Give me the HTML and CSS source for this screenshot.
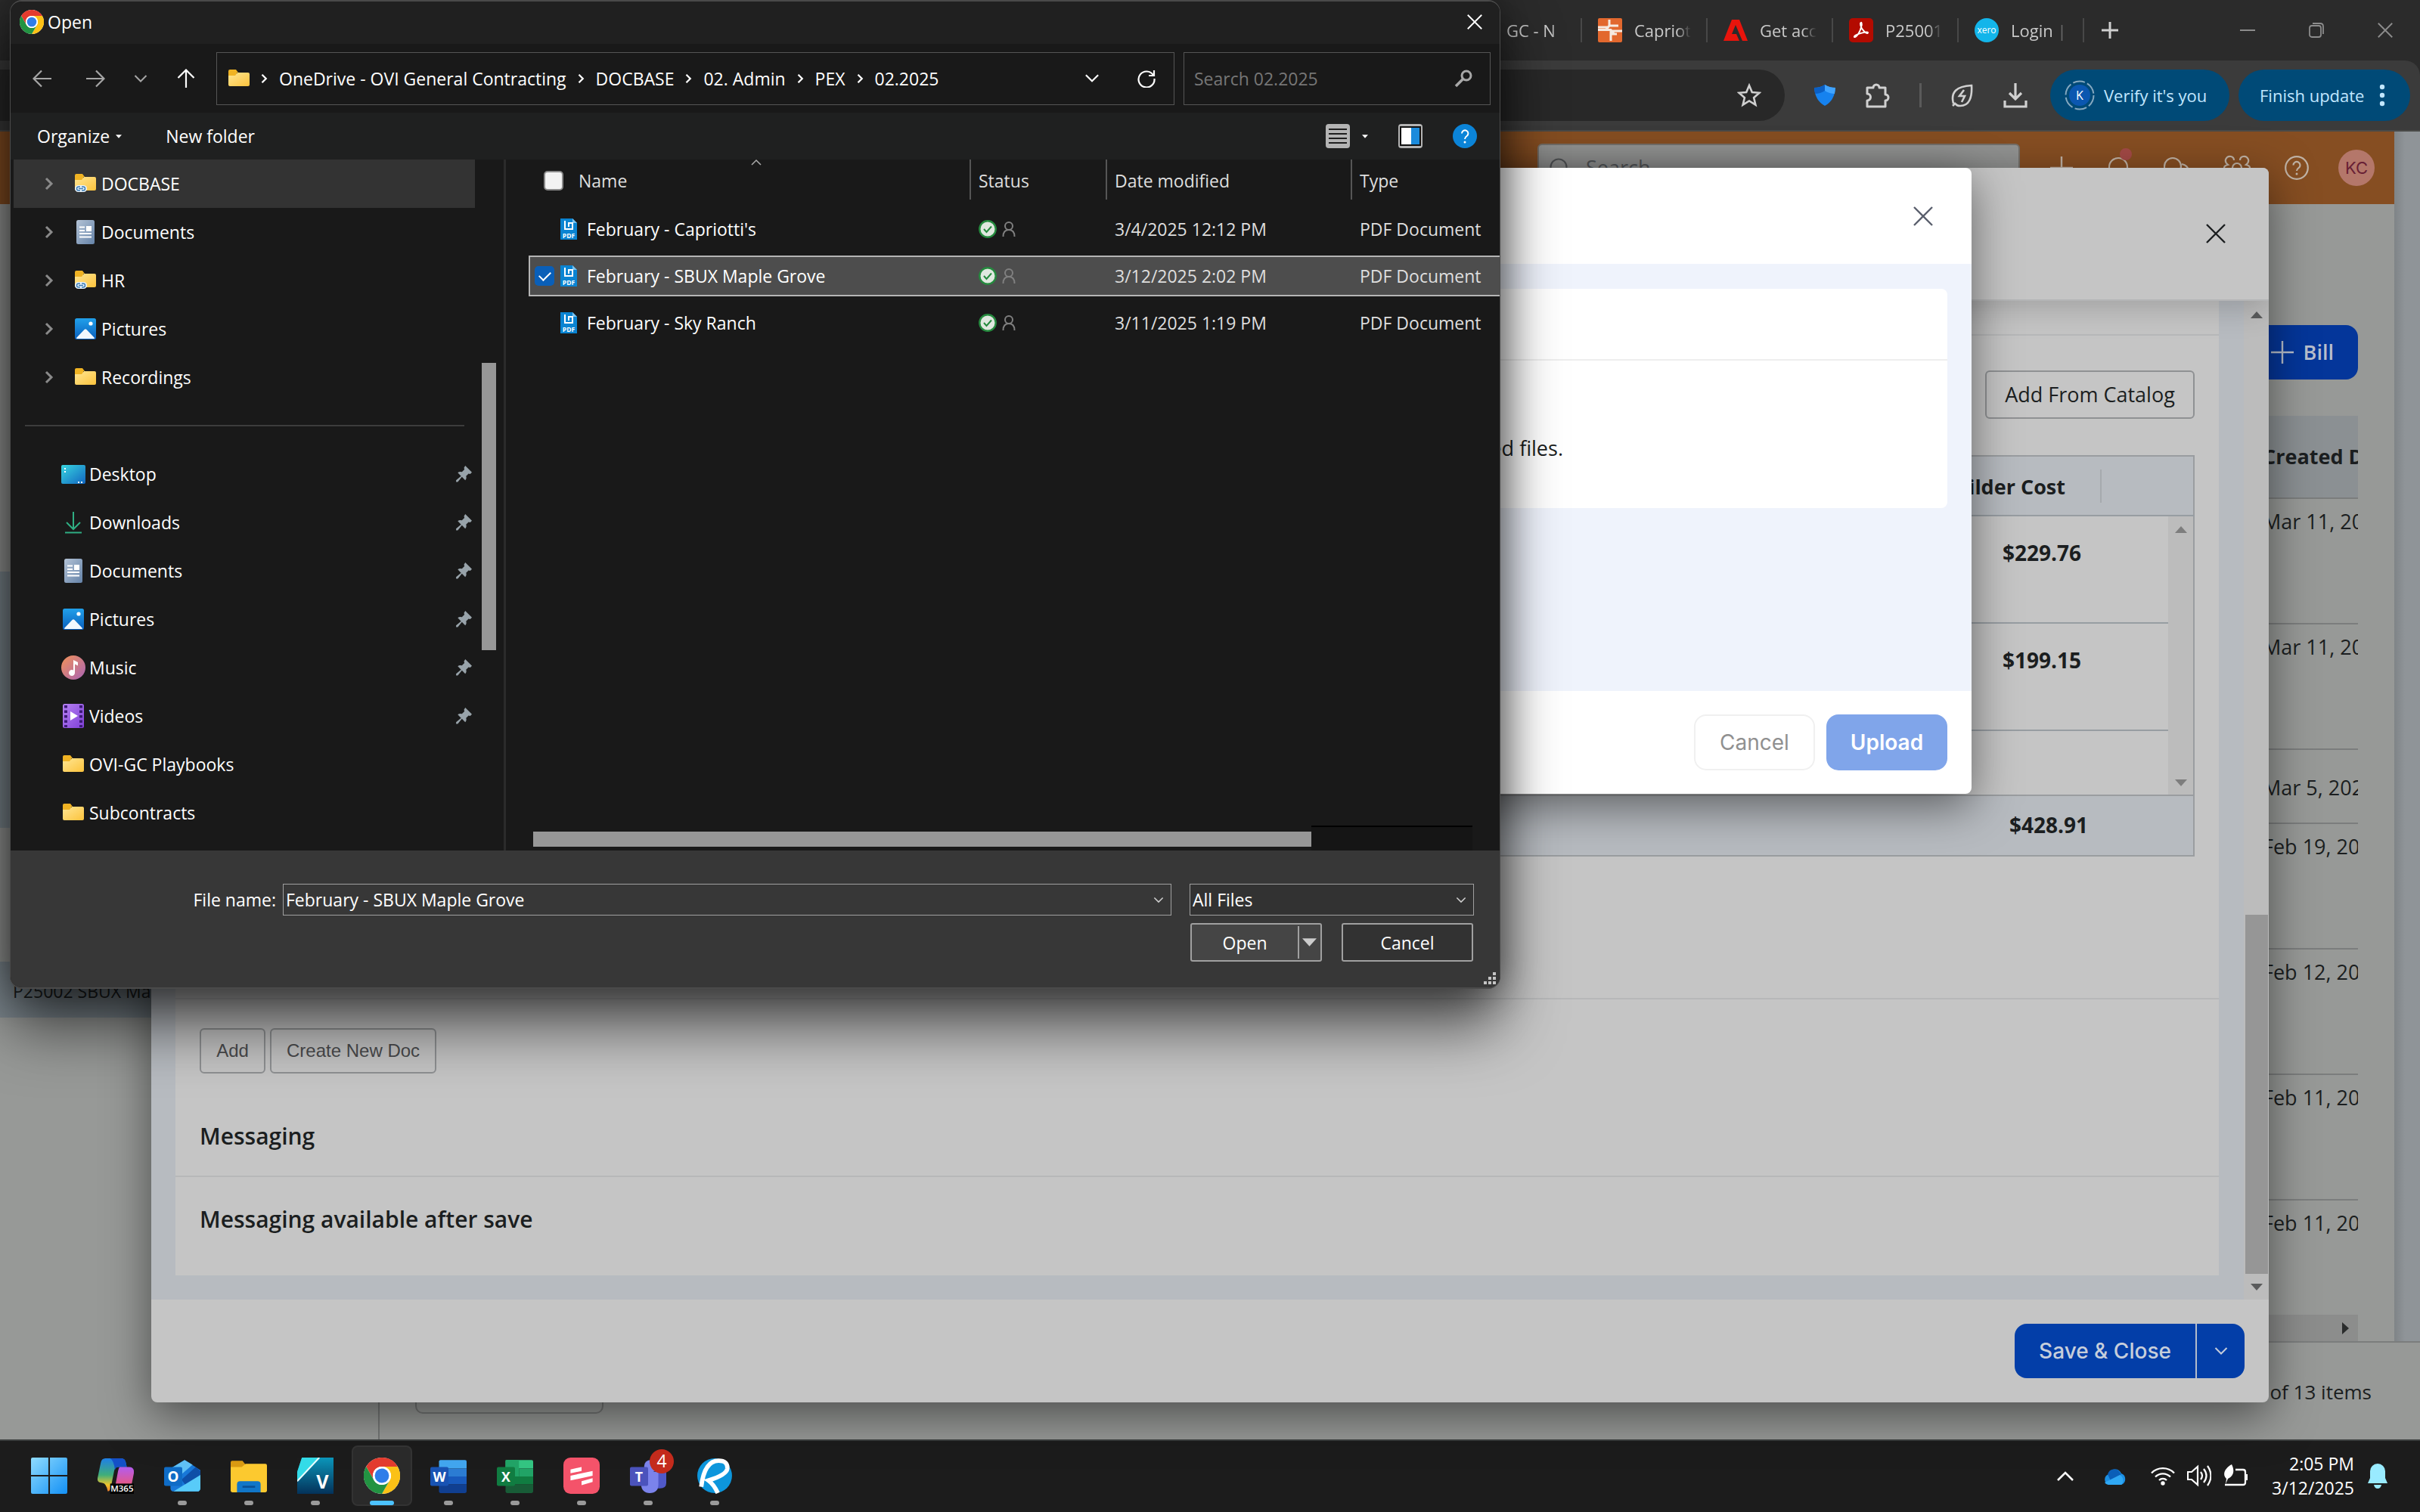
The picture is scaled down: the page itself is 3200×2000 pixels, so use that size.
FILE: index.html
```html
<!DOCTYPE html>
<html lang="en">

<head>
    <meta charset="utf-8">
    <title>Open</title>
    <link rel="stylesheet" href="styles.css">
</head>

<body>
    <!-- shared icons -->
    <svg class="sprite" aria-hidden="true">
        <defs>
            <linearGradient id="gFolder" x1="0" y1="0" x2="1" y2="1">
                <stop offset="0" stop-color="#ffe694" />
                <stop offset="1" stop-color="#fcc33c" />
            </linearGradient>
            <linearGradient id="gDoc" x1="0" y1="0" x2="1" y2="1">
                <stop offset="0" stop-color="#b4c3d6" />
                <stop offset="1" stop-color="#6583a8" />
            </linearGradient>
            <linearGradient id="gDesk" x1="0" y1="0" x2="1" y2="1">
                <stop offset="0" stop-color="#38d6e0" />
                <stop offset="1" stop-color="#1266c0" />
            </linearGradient>
            <linearGradient id="gMusic" x1="0" y1="0" x2="1" y2="1">
                <stop offset="0" stop-color="#f29257" />
                <stop offset="1" stop-color="#a963b5" />
            </linearGradient>
            <linearGradient id="gPurple" x1="0" y1="0" x2="1" y2="1">
                <stop offset="0" stop-color="#b681f2" />
                <stop offset="1" stop-color="#7f3fd8" />
            </linearGradient>
            <linearGradient id="gBlue" x1="0" y1="0" x2="0" y2="1">
                <stop offset="0" stop-color="#21a0ea" />
                <stop offset="1" stop-color="#0a5fbd" />
            </linearGradient>
            <linearGradient id="gWin" x1="0" y1="0" x2="1" y2="1">
                <stop offset="0" stop-color="#8fdcff" />
                <stop offset="1" stop-color="#1390f5" />
            </linearGradient>
            <linearGradient id="gCopA" x1="0" y1="0" x2="0" y2="1">
                <stop offset="0" stop-color="#1f7fe8" />
                <stop offset=".5" stop-color="#3fae7a" />
                <stop offset=".8" stop-color="#f0c52c" />
                <stop offset="1" stop-color="#f07a2c" />
            </linearGradient>
            <linearGradient id="gCopB" x1="0" y1="0" x2="0" y2="1">
                <stop offset="0" stop-color="#b35cf0" />
                <stop offset="1" stop-color="#f2566a" />
            </linearGradient>
            <linearGradient id="gV" x1="0" y1="0" x2="0" y2="1">
                <stop offset="0" stop-color="#0b96ba" />
                <stop offset="1" stop-color="#04325a" />
            </linearGradient>
        </defs>
        <symbol id="chrome" viewBox="0 0 48 48">
            <circle cx="24" cy="24" r="24" fill="#fff" />
            <path d="M3.2 12A24 24 0 0 1 44.8 12H24a12 12 0 0 0-10.4 18z" fill="#e33b2e" />
            <path d="M44.8 12A24 24 0 0 1 24 48l10.4-18A12 12 0 0 0 24 12z" fill="#fbc116" />
            <path d="M24 48A24 24 0 0 1 3.2 12l10.4 18a12 12 0 0 0 20.8 0z" fill="#229342" />
            <circle cx="24" cy="24" r="12" fill="#fff" />
            <circle cx="24" cy="24" r="9.4" fill="#2f7de9" />
        </symbol>
        <symbol id="folder" viewBox="0 0 28 24">
            <path d="M0 2a2 2 0 0 1 2-2h8l3 4h-2v6H0z" fill="#f0b323" />
            <path d="M0 8h9l3-4h14a2 2 0 0 1 2 2v14a2 2 0 0 1-2 2H2a2 2 0 0 1-2-2z" fill="url(#gFolder)" />
        </symbol>
        <symbol id="folderlink" viewBox="0 0 28 26">
            <path d="M0 2a2 2 0 0 1 2-2h8l3 4h-2v6H0z" fill="#f0b323" />
            <path d="M0 8h9l3-4h14a2 2 0 0 1 2 2v14a2 2 0 0 1-2 2H2a2 2 0 0 1-2-2z" fill="url(#gFolder)" />
            <rect x="0" y="15" width="16" height="9" rx="4.5" fill="#e8f2fa" />
            <path d="M7 17H5a2.500 2.500 0 0 0 0 5h2M9 17h2a2.500 2.500 0 0 1 0 5H9M5 19.500h6" fill="none" stroke="#3d7db5" stroke-width="1.500" />
        </symbol>
        <symbol id="doc" viewBox="0 0 28 32">
            <rect x="2" width="24" height="32" rx="2.500" fill="url(#gDoc)" />
            <path d="M6 9.500h7M6 14h7M6 18h16M6 22.500h16" stroke="#fff" stroke-width="2" />
            <rect x="15" y="8" width="7" height="7" fill="#fff" />
        </symbol>
        <symbol id="pictures" viewBox="0 0 28 28">
            <rect width="28" height="28" rx="2.500" fill="url(#gBlue)" />
            <path d="M2 26l10.500-11a2 2 0 0 1 3 0L26 26q0 1-1 1H3q-1 0-1-1z" fill="#f2f8fd" />
            <circle cx="21" cy="7" r="2.600" fill="#fff" />
        </symbol>
        <symbol id="desktop" viewBox="0 0 32 25">
            <rect width="32" height="25" rx="2" fill="url(#gDesk)" />
            <path d="M4 5h2M4 9h2M22 23h2M26 23h2" stroke="#fff" stroke-width="2" />
        </symbol>
        <symbol id="downloads" viewBox="0 0 28 30">
            <path d="M14 1v23M5 15l9 9 9-9M3 28.500h22" fill="none" stroke="#2fae83" stroke-width="2" />
        </symbol>
        <symbol id="music" viewBox="0 0 32 32">
            <circle cx="16" cy="16" r="16" fill="url(#gMusic)" />
            <path d="M16 6v13.500a4 4 0 1 0 2 3V11.500l4 2V9z" fill="#fff" />
        </symbol>
        <symbol id="videos" viewBox="0 0 28 32">
            <rect width="28" height="32" rx="2.500" fill="url(#gPurple)" />
            <path d="M4 2v29M24 2v29" stroke="#3d1a78" stroke-width="4" stroke-dasharray="3.500 3" />
            <path d="M10 10l10 6-10 6z" fill="#fff" />
        </symbol>
        <symbol id="pin" viewBox="0 0 20 20">
            <path d="M12 0l8 8-2 2-2-.5-3 3q1 3-1 5l-4-4-5 6H1v-2l6-5-4-4q2-2 5-1l3-3-.5-2z" fill="#98a3aa" />
        </symbol>
        <symbol id="pdffile" viewBox="0 0 22 28">
            <path d="M0 0h16l6 6v22H0z" fill="#0a84d2" />
            <path d="M16 0l6 6h-6z" fill="#7cc4f0" />
            <path d="M6 3v11h10V6h-5v5" fill="none" stroke="#fff" stroke-width="2" />
            <text x="11" y="25.500" font-size="8.500" font-weight="700" text-anchor="middle" fill="#fff" font-family="Open Sans, sans-serif">PDF</text>
        </symbol>
        <symbol id="synced" viewBox="0 0 24 24">
            <circle cx="12" cy="12" r="10.700" fill="#dfe8df" stroke="#258a3e" stroke-width="2.400" />
            <path d="M7 12l3.500 4L17 8.500" fill="none" stroke="#258a3e" stroke-width="2" />
        </symbol>
        <symbol id="person" viewBox="0 0 18 20">
            <circle cx="9" cy="6" r="5" fill="none" stroke="currentColor" stroke-width="2" />
            <path d="M1.500 20c0-6 3-9 7.500-9s7.500 3 7.500 9" fill="none" stroke="currentColor" stroke-width="2" />
        </symbol>
        <symbol id="chev-right" viewBox="0 0 12 18">
            <path d="M2 2l7 7-7 7" fill="none" stroke="currentColor" stroke-width="3" />
        </symbol>
        <symbol id="chev-down" viewBox="0 0 18 12">
            <path d="M1.500 2L9 9.500 16.500 2" fill="none" stroke="currentColor" stroke-width="2" />
        </symbol>
        <symbol id="cross" viewBox="0 0 26 26">
            <path d="M1 1l24 24M25 1L1 25" stroke="currentColor" stroke-width="2.400" />
        </symbol>
        <symbol id="plus" viewBox="0 0 30 30">
            <path d="M15 0v30M0 15h30" stroke="currentColor" stroke-width="2.400" />
        </symbol>
        <symbol id="arrow" viewBox="0 0 26 24">
            <path d="M25 12H2M12 1.500L1.500 12 12 22.500" fill="none" stroke="currentColor" stroke-width="2.200" />
        </symbol>
        <symbol id="help" viewBox="0 0 32 32">
            <circle cx="16" cy="16" r="14.800" fill="none" stroke="currentColor" stroke-width="2.200" />
            <path d="M11.500 12.500a4.500 4.500 0 1 1 7 3.700q-2.500 1.600-2.500 3.800" fill="none" stroke="currentColor" stroke-width="2.200" />
            <circle cx="16" cy="24" r="1.500" fill="currentColor" />
        </symbol>
        <symbol id="tri" viewBox="0 0 16 9">
            <path d="M0 0h16L8 9z" fill="currentColor" />
        </symbol>
    </svg>

    <div class="desktop">

        <!-- browser window -->
        <div class="browser">
            <div class="tabs">
                <div class="tab"><span class="tab-text">GC - N</span></div>
                <div class="tab">
                    <svg class="fav" viewBox="0 0 32 32"><rect width="32" height="32" rx="2" fill="#e2682e" /><path d="M15 2v8H27M15 10l-4 5M0 15.500h17l4 5M0 12h14M32 17H17v13M17 21h8" stroke="#f5e9e0" stroke-width="3" fill="none" /></svg>
                    <span class="tab-text">Capriot</span>
                </div>
                <div class="tab">
                    <svg class="fav" viewBox="0 0 32 32"><path d="M11 2h10l11 28h-7L16 9 11 21h6l4 9H0z" fill="#e8140c" /></svg>
                    <span class="tab-text">Get acc</span>
                </div>
                <div class="tab">
                    <svg class="fav" viewBox="0 0 32 32"><rect width="32" height="32" rx="5" fill="#b30b00" /><path d="M7 25c-2-3 17-8 18-6 0 4-10-4-10-12 1-3 3 0 1 5-1 5-6 14-9 13z" fill="none" stroke="#fff" stroke-width="1.900" /></svg>
                    <span class="tab-text">P25001</span>
                </div>
                <div class="tab">
                    <svg class="fav" viewBox="0 0 32 32"><circle cx="16" cy="16" r="16" fill="#13b5ea" /><text x="16" y="20" font-size="12" text-anchor="middle" fill="#fff" font-family="Open Sans, sans-serif">xero</text></svg>
                    <span class="tab-text">Login |</span>
                </div>
                <button class="newtab" aria-label="New tab"><svg width="22" height="22" viewBox="0 0 22 22"><path d="M11 0v22M0 11h22" stroke="currentColor" stroke-width="3" /></svg></button>
                <div class="winctl">
                    <button aria-label="Minimize"><svg width="20" height="20" viewBox="0 0 20 20"><path d="M0 10h20" stroke="currentColor" stroke-width="2" /></svg></button>
                    <button aria-label="Restore"><svg width="20" height="20" viewBox="0 0 20 20"><rect x="1" y="4" width="15" height="15" rx="3" fill="none" stroke="currentColor" stroke-width="1.800" /><path d="M5 1h10q4 0 4 4v10" fill="none" stroke="currentColor" stroke-width="1.800" /></svg></button>
                    <button aria-label="Close"><svg width="20" height="20"><use href="#cross" /></svg></button>
                </div>
            </div>

            <div class="toolbar">
                <div class="omnibox">
                    <svg width="32" height="32" viewBox="0 0 32 32"><path d="M16 3l3.800 9 9.700.8-7.400 6.400 2.300 9.500L16 23.500l-8.400 5.200 2.300-9.500-7.400-6.400 9.700-.8z" fill="none" stroke="#d0d0d0" stroke-width="2.600" /></svg>
                </div>
                <svg width="30" height="30" viewBox="0 0 30 30"><path d="M15 1q6 4 14 4-1 17-14 24Q2 22 1 5q8 0 14-4z" fill="#1682ef" /><path d="M1 5q8 0 14-4v8q-6 4-13 4z" fill="#0b5fc4" /><path d="M29 5q-8 0-14-4v8q6 4 13 4z" fill="#41a4ff" /></svg>
                <svg width="34" height="34" viewBox="0 0 34 34"><path d="M3 7h8a4 4 0 0 1 8 0h8v9a4 4 0 0 1 0 8v8H3v-8a4 4 0 0 0 0-9z" fill="none" stroke="#d0d0d0" stroke-width="3" stroke-linejoin="round" /></svg>
                <span class="bar"></span>
                <svg width="32" height="32" viewBox="0 0 32 32"><path d="M4 27C0 12 8 4 28 3c1 16-3 27-15 27q-5 0-6-3M3 30l4-4" fill="none" stroke="#d0d0d0" stroke-width="2.600" /><path d="M18 9l-6 8h7l-4 8" fill="none" stroke="#d0d0d0" stroke-width="2.600" /></svg>
                <svg width="32" height="34" viewBox="0 0 32 34"><path d="M16 1v20M8 14l8 8 8-8M2 24v8h28v-8" fill="none" stroke="#d0d0d0" stroke-width="3.200" /></svg>
                <div class="pills">
                    <button class="pill">
                        <svg width="40" height="40" viewBox="0 0 40 40"><circle cx="20" cy="20" r="18.500" fill="none" stroke="#86a9c0" stroke-width="2" stroke-dasharray="16 3.400" /><circle cx="20" cy="20" r="14" fill="#0b57b0" /><text x="20" y="26" font-size="16" text-anchor="middle" fill="#fff" font-family="Open Sans, sans-serif">K</text></svg>
                        Verify it's you
                    </button>
                    <button class="pill finish">Finish update
                        <svg width="8" height="30" viewBox="0 0 8 30"><circle cx="4" cy="4" r="3.200" fill="#c2e7ff" /><circle cx="4" cy="15" r="3.200" fill="#c2e7ff" /><circle cx="4" cy="26" r="3.200" fill="#c2e7ff" /></svg>
                    </button>
                </div>
            </div>

            <div class="page">
                <div class="app">
                    <div class="app-main">
                        <header class="app-head">
                            <label class="search">
                                <svg width="26" height="26" viewBox="0 0 26 26"><circle cx="12" cy="12" r="10.500" fill="none" stroke="#55585b" stroke-width="2" /></svg>
                                <input type="search" placeholder="Search" aria-label="Search">
                            </label>
                            <div class="head-icons">
                                <svg width="30" height="30"><use href="#plus" /></svg>
                                <span class="bell">
                                    <svg width="30" height="32" viewBox="0 0 30 32"><path d="M3 24V15a12 12 0 0 1 24 0v9l2 3H1z" fill="none" stroke="currentColor" stroke-width="2.200" /></svg>
                                    <i class="dot"></i>
                                </span>
                                <svg width="34" height="30" viewBox="0 0 34 30"><path d="M1 26V13a11 11 0 1 1 11 11zM24 10q9 2 9 10v8h-9" fill="none" stroke="currentColor" stroke-width="2.200" /></svg>
                                <svg width="36" height="34" viewBox="0 0 36 34"><path d="M1 17q0-3 5-4-4-3-3-7 2-5 7-4 4 1 4 5M35 17q0-3-5-4 4-3 3-7-2-5-7-4-4 1-4 5" fill="none" stroke="currentColor" stroke-width="2.200" /><circle cx="18" cy="17" r="6" fill="none" stroke="currentColor" stroke-width="2.200" /></svg>
                                <svg width="32" height="32"><use href="#help" /></svg>
                                <span class="avatar">KC</span>
                            </div>
                        </header>
                        <div class="app-body">
                            <aside class="jobs">
                                <div class="job tall"></div>
                                <div class="job">P25002 SBUX Maple Grove</div>
                            </aside>
                            <main class="list">
                                <button class="btn-bill"><svg width="30" height="30"><use href="#plus" /></svg>Bill</button>
                                <table class="bills">
                                    <thead>
                                        <tr><th></th><th class="date">Created Date</th></tr>
                                    </thead>
                                    <tbody>
                                        <tr><td></td><td class="date">Mar 11, 2025</td></tr>
                                        <tr><td></td><td class="date">Mar 11, 2025</td></tr>
                                        <tr class="short"><td></td><td class="date">Mar 5, 2025</td></tr>
                                        <tr><td></td><td class="date">Feb 19, 2025</td></tr>
                                        <tr><td></td><td class="date">Feb 12, 2025</td></tr>
                                        <tr><td></td><td class="date">Feb 11, 2025</td></tr>
                                        <tr class="end"><td></td><td class="date">Feb 11, 2025</td></tr>
                                    </tbody>
                                </table>
                                <div class="hscroll"><svg width="9" height="16" viewBox="0 0 9 16"><path d="M0 0l9 8-9 8z" fill="#2a2c2c" /></svg></div>
                            </main>
                        </div>
                    </div>
                    <div class="edge"></div>
                </div>
                <div class="pager">
                    <div class="pager-left"></div>
                    <div class="pager-box"></div>
                    <span>of 13 items</span>
                </div>

                <!-- bill form -->
                <section class="modal bill">
                    <header><button class="x" aria-label="Close"><svg width="26" height="26"><use href="#cross" /></svg></button></header>
                    <div class="bill-body">
                        <div class="bill-card">
                            <div class="strip"></div>
                            <div class="items">
                                <button class="btn-line big">Add From Catalog</button>
                                <table class="costs">
                                    <colgroup><col><col class="c-cost"><col class="c-gap"><col class="c-bar"></colgroup>
                                    <thead>
                                        <tr><th></th><th class="num">Builder Cost</th><th class="tick"></th><th></th></tr>
                                    </thead>
                                    <tbody>
                                        <tr>
                                            <td></td><td class="num">$229.76</td><td></td>
                                            <td rowspan="3" class="barcell">
                                                <div class="vbar"><svg class="up" width="16" height="9"><use href="#tri" /></svg><svg width="16" height="9"><use href="#tri" /></svg></div>
                                            </td>
                                        </tr>
                                        <tr><td></td><td class="num">$199.15</td><td></td></tr>
                                        <tr class="last"><td></td><td></td><td></td></tr>
                                    </tbody>
                                    <tfoot>
                                        <tr><td></td><td class="num">$428.91</td><td></td><td></td></tr>
                                    </tfoot>
                                </table>
                            </div>
                            <div class="docs">
                                <button class="btn-line">Add</button>
                                <button class="btn-line">Create New Doc</button>
                            </div>
                            <h3>Messaging</h3>
                            <p>Messaging available after save</p>
                        </div>
                        <div class="scroll">
                            <svg class="up" width="16" height="9"><use href="#tri" /></svg>
                            <div class="thumb"></div>
                            <svg width="16" height="9"><use href="#tri" /></svg>
                        </div>
                    </div>
                    <footer>
                        <div class="split">
                            <button>Save &amp; Close</button>
                            <button class="more" aria-label="More"><svg width="18" height="12"><use href="#chev-down" /></svg></button>
                        </div>
                    </footer>
                </section>

                <!-- upload -->
                <section class="modal upload">
                    <header><button class="x" aria-label="Close"><svg width="26" height="26"><use href="#cross" /></svg></button></header>
                    <div class="upload-body">
                        <div class="upload-card">
                            <div class="upload-top"></div>
                            <p>No selected files.</p>
                        </div>
                    </div>
                    <footer>
                        <button class="cancel">Cancel</button>
                        <button class="go">Upload</button>
                    </footer>
                </section>
            </div>
        </div>

        <!-- file picker -->
        <div class="picker">
            <div class="p-title">
                <svg width="32" height="32"><use href="#chrome" /></svg>
                <span>Open</span>
                <button aria-label="Close"><svg width="20" height="20"><use href="#cross" /></svg></button>
            </div>
            <div class="p-nav">
                <div class="arrows">
                    <svg class="back" width="26" height="24"><use href="#arrow" /></svg>
                    <svg class="fwd" width="26" height="24"><use href="#arrow" /></svg>
                    <svg width="18" height="12"><use href="#chev-down" /></svg>
                    <svg class="to-top" width="26" height="24"><use href="#arrow" /></svg>
                </div>
                <div class="address">
                    <svg width="28" height="24"><use href="#folder" /></svg>
                    <svg width="9" height="14"><use href="#chev-right" /></svg>
                    <span>OneDrive - OVI General Contracting</span>
                    <svg width="9" height="14"><use href="#chev-right" /></svg>
                    <span>DOCBASE</span>
                    <svg width="9" height="14"><use href="#chev-right" /></svg>
                    <span>02. Admin</span>
                    <svg width="9" height="14"><use href="#chev-right" /></svg>
                    <span>PEX</span>
                    <svg width="9" height="14"><use href="#chev-right" /></svg>
                    <span>02.2025</span>
                    <svg class="drop" width="20" height="13"><use href="#chev-down" /></svg>
                    <svg width="24" height="24" viewBox="0 0 24 24"><path d="M21 7.500A10.500 10.500 0 1 0 22.500 12M22 1v7h-7" fill="none" stroke="#fff" stroke-width="2.200" /></svg>
                </div>
                <div class="find">
                    <input type="text" placeholder="Search 02.2025" aria-label="Search 02.2025">
                    <svg width="24" height="24" viewBox="0 0 24 24"><circle cx="16" cy="8" r="6" fill="none" stroke="#a8a8a8" stroke-width="3" /><path d="M12 12L2 22" stroke="#a8a8a8" stroke-width="3.500" /></svg>
                </div>
            </div>
            <div class="p-tools">
                <button>Organize <svg width="8" height="5"><use href="#tri" /></svg></button>
                <button>New folder</button>
                <div class="views">
                    <svg width="32" height="32" viewBox="0 0 32 32"><rect width="32" height="32" rx="4" fill="#b4b4b4" /><path d="M4 7h24M4 13h24M4 19h24M4 25h24" stroke="#1f1f1f" stroke-width="2" /></svg>
                    <svg class="caret" width="8" height="5"><use href="#tri" /></svg>
                    <svg width="32" height="32" viewBox="0 0 32 32"><rect width="32" height="32" rx="4" fill="#b4b4b4" /><rect x="3" y="4" width="26" height="24" fill="#fff" stroke="#111" stroke-width="2" /><rect x="17" y="5" width="11" height="22" fill="#1b8bdc" /></svg>
                    <svg class="q" width="32" height="32" viewBox="0 0 32 32"><circle cx="16" cy="16" r="16" fill="#0b84d8" /><path d="M12 12.500a4.200 4.200 0 1 1 6.500 3.500Q16 17.500 16 20" fill="none" stroke="#fff" stroke-width="2" /><circle cx="16" cy="24" r="1.500" fill="#fff" /></svg>
                </div>
            </div>

            <div class="p-body">
                <nav class="places">
                    <ul class="tree">
                        <li class="on"><svg class="exp" width="12" height="18"><use href="#chev-right" /></svg><svg class="ico" width="28" height="26"><use href="#folderlink" /></svg><a href="#">DOCBASE</a></li>
                        <li><svg class="exp" width="12" height="18"><use href="#chev-right" /></svg><svg class="ico" width="28" height="32"><use href="#doc" /></svg><a href="#">Documents</a></li>
                        <li><svg class="exp" width="12" height="18"><use href="#chev-right" /></svg><svg class="ico" width="28" height="26"><use href="#folderlink" /></svg><a href="#">HR</a></li>
                        <li><svg class="exp" width="12" height="18"><use href="#chev-right" /></svg><svg class="ico" width="28" height="28"><use href="#pictures" /></svg><a href="#">Pictures</a></li>
                        <li><svg class="exp" width="12" height="18"><use href="#chev-right" /></svg><svg class="ico" width="28" height="24"><use href="#folder" /></svg><a href="#">Recordings</a></li>
                    </ul>
                    <div class="rule"></div>
                    <ul class="quick">
                        <li><svg class="ico" width="32" height="25"><use href="#desktop" /></svg><a href="#">Desktop</a><svg class="pin" width="22" height="22"><use href="#pin" /></svg></li>
                        <li><svg class="ico" width="32" height="30"><use href="#downloads" /></svg><a href="#">Downloads</a><svg class="pin" width="22" height="22"><use href="#pin" /></svg></li>
                        <li><svg class="ico" width="32" height="32"><use href="#doc" /></svg><a href="#">Documents</a><svg class="pin" width="22" height="22"><use href="#pin" /></svg></li>
                        <li><svg class="ico" width="32" height="28"><use href="#pictures" /></svg><a href="#">Pictures</a><svg class="pin" width="22" height="22"><use href="#pin" /></svg></li>
                        <li><svg class="ico" width="32" height="32"><use href="#music" /></svg><a href="#">Music</a><svg class="pin" width="22" height="22"><use href="#pin" /></svg></li>
                        <li><svg class="ico" width="32" height="32"><use href="#videos" /></svg><a href="#">Videos</a><svg class="pin" width="22" height="22"><use href="#pin" /></svg></li>
                        <li><svg class="ico" width="32" height="24"><use href="#folder" /></svg><a href="#">OVI-GC Playbooks</a></li>
                        <li><svg class="ico" width="32" height="24"><use href="#folder" /></svg><a href="#">Subcontracts</a></li>
                    </ul>
                </nav>
                <div class="places-bar"><div></div></div>

                <div class="files">
                    <svg class="sort" width="14" height="8" viewBox="0 0 14 8"><path d="M1 7l6-6 6 6" fill="none" stroke="#aaa" stroke-width="1.500" /></svg>
                    <table>
                        <colgroup><col class="f-name"><col class="f-status"><col class="f-date"><col></colgroup>
                        <thead>
                            <tr>
                                <th><div class="cell head"><input type="checkbox" aria-label="Select all">Name</div></th>
                                <th>Status</th>
                                <th>Date modified</th>
                                <th>Type</th>
                            </tr>
                        </thead>
                        <tbody>
                            <tr>
                                <td><div class="cell"><span class="nobox"></span><svg width="22" height="28"><use href="#pdffile" /></svg>February - Capriotti's</div></td>
                                <td><div class="state"><svg width="24" height="24"><use href="#synced" /></svg><svg width="18" height="20"><use href="#person" /></svg></div></td>
                                <td>3/4/2025 12:12 PM</td>
                                <td>PDF Document</td>
                            </tr>
                            <tr class="sel">
                                <td><div class="cell"><input type="checkbox" checked aria-label="February - SBUX Maple Grove"><svg width="22" height="28"><use href="#pdffile" /></svg>February - SBUX Maple Grove</div></td>
                                <td><div class="state"><svg width="24" height="24"><use href="#synced" /></svg><svg width="18" height="20"><use href="#person" /></svg></div></td>
                                <td>3/12/2025 2:02 PM</td>
                                <td>PDF Document</td>
                            </tr>
                            <tr>
                                <td><div class="cell"><span class="nobox"></span><svg width="22" height="28"><use href="#pdffile" /></svg>February - Sky Ranch</div></td>
                                <td><div class="state"><svg width="24" height="24"><use href="#synced" /></svg><svg width="18" height="20"><use href="#person" /></svg></div></td>
                                <td>3/11/2025 1:19 PM</td>
                                <td>PDF Document</td>
                            </tr>
                        </tbody>
                    </table>
                    <div class="files-bar"><div class="on"></div><div class="off"></div></div>
                </div>
            </div>

            <div class="p-foot">
                <label for="fname">File name:</label>
                <div class="combo">
                    <input id="fname" type="text" value="February - SBUX Maple Grove">
                    <svg width="14" height="9"><use href="#chev-down" /></svg>
                </div>
                <div class="choices">
                    <div class="combo type">
                        <select aria-label="File type"><option>All Files</option></select>
                        <svg width="14" height="9"><use href="#chev-down" /></svg>
                    </div>
                    <div class="actions">
                        <div class="open">
                            <button>Open</button>
                            <button class="more" aria-label="Open options"><svg width="19" height="11"><use href="#tri" /></svg></button>
                        </div>
                        <button class="cancel">Cancel</button>
                    </div>
                </div>
                <svg class="grip" width="17" height="17" viewBox="0 0 17 17"><path d="M12 0h4v4h-4zM6 6h4v4H6zM12 6h4v4h-4zM0 12h4v4H0zM6 12h4v4H6zM12 12h4v4h-4z" fill="#c4c4c4" /></svg>
            </div>
        </div>

        <!-- taskbar -->
        <div class="taskbar">
            <div class="apps">
                <button aria-label="Start"><svg viewBox="0 0 46 46"><path d="M0 2a2 2 0 0 1 2-2h20v22H0zM24 0h20a2 2 0 0 1 2 2v20H24zM0 24h22v22H2a2 2 0 0 1-2-2zM24 24h22v20a2 2 0 0 1-2 2H24z" fill="url(#gWin)" /></svg></button>
                <button aria-label="M365 Copilot"><svg viewBox="0 0 46 46"><path d="M10 1h20q5 0 6 6l1 5H26q-4 0-5 5l-4 20q-1 6-4 6-2-11-7-11-7 0-6-6L4 7q1-6 6-6z" fill="url(#gCopA)" /><path d="M16 1h14q5 0 6 6l1 5H26q-3 0-4 4-1-12-6-15z" fill="#1450c8" /><path d="M28 12h12q7 0 6 8l-3 15q-1 5-6 5H18q4-2 5-7l3-16q1-4 2-5z" fill="url(#gCopB)" /><rect x="16" y="33" width="30" height="13" fill="#000" /><text x="31" y="43.500" font-size="11" font-weight="600" text-anchor="middle" fill="#fff" font-family="Open Sans, sans-serif">M365</text></svg></button>
                <button class="run" aria-label="Outlook"><svg viewBox="0 0 46 46"><path d="M8 14L26 3l20 13v23a4 4 0 0 1-4 4H12a4 4 0 0 1-4-4z" fill="#1878d8" /><path d="M8 14L26 3l10 6L12 30z" fill="#5fc0f5" /><path d="M22 28L40 12l6 5v5L28 36z" fill="#0e4fa8" /><path d="M12 43l34-21v17a4 4 0 0 1-4 4z" fill="#58cbf9" /><rect y="12" width="23" height="24" rx="2" fill="#0f6cc6" /><text x="11.500" y="31" font-size="18" font-weight="700" text-anchor="middle" fill="#fff" font-family="Open Sans, sans-serif">O</text></svg></button>
                <button class="run" aria-label="File Explorer"><svg viewBox="0 0 46 46"><path d="M0 6q0-2 2-2h13l4 5v7H0z" fill="#d99a12" /><path d="M0 12h14l5-4h25q2 0 2 2v32q0 2-2 2H2q-2 0-2-2z" fill="#fcc92f" /><path d="M8 44V34q0-4 4-4h22q4 0 4 4v10z" fill="#1176c8" /><path d="M15 37h16" stroke="#0a4f94" stroke-width="2.500" /></svg></button>
                <button class="run" aria-label="Vista"><svg viewBox="0 0 46 46"><rect width="46" height="46" fill="url(#gV)" /><path d="M0 0h6L0 18z" fill="#1c1c1c" /><path d="M6 0h22L0 30V18z" fill="#33dbe8" /><path d="M28 0L0 30" stroke="#eaffff" stroke-width="2" /><text x="32" y="39" font-size="24" font-weight="700" text-anchor="middle" fill="#fff" font-family="Open Sans, sans-serif">V</text></svg></button>
                <button class="run active" aria-label="Chrome"><svg><use href="#chrome" /></svg></button>
                <button class="run" aria-label="Word"><svg viewBox="0 0 46 46"><path d="M11 5q0-2 2-2h31q2 0 2 2v9H11z" fill="#41a5ee" /><path d="M11 14h35v10H11z" fill="#2b7cd3" /><path d="M11 24h35v10H11z" fill="#185abd" /><path d="M11 34h35v9q0 2-2 2H13q-2 0-2-2z" fill="#103f91" /><rect y="12" width="23" height="24" rx="2" fill="#1853b3" /><text x="11.500" y="30.500" font-size="17" font-weight="700" text-anchor="middle" fill="#fff" font-family="Open Sans, sans-serif">W</text></svg></button>
                <button class="run" aria-label="Excel"><svg viewBox="0 0 46 46"><path d="M11 5q0-2 2-2h31q2 0 2 2v9H11z" fill="#33c481" /><path d="M11 3h17v21H11z" fill="#21a366" /><path d="M28 14h18v10H28z" fill="#21a366" /><path d="M11 24h35v10H11z" fill="#107c41" /><path d="M11 34h35v9q0 2-2 2H13q-2 0-2-2z" fill="#185c37" /><rect y="12" width="23" height="24" rx="2" fill="#107c41" /><text x="11.500" y="30.500" font-size="17" font-weight="700" text-anchor="middle" fill="#fff" font-family="Open Sans, sans-serif">X</text></svg></button>
                <button class="run" aria-label="Buildertrend"><svg viewBox="0 0 46 46"><rect width="46" height="46" rx="9" fill="#f4536a" /><path d="M9 15l14-3v5L9 20zM9 23l28-6v6L9 29zM23 30l14-4v5l-14 4z" fill="#fff" /></svg></button>
                <button class="run" aria-label="Teams"><svg viewBox="0 0 46 46"><circle cx="26" cy="11" r="8" fill="#7b83eb" /><circle cx="39" cy="12" r="5" fill="#5059c9" /><path d="M30 18h16v14q0 7-8 7h-8z" fill="#5059c9" /><path d="M14 18h22v16q0 11-11 11-10 0-11-11z" fill="#7b83eb" /><rect y="12" width="23" height="24" rx="2" fill="#4b53bc" /><text x="11.500" y="30.500" font-size="17" font-weight="700" text-anchor="middle" fill="#fff" font-family="Open Sans, sans-serif">T</text></svg><b class="count">4</b></button>
                <button class="run" aria-label="Bluebeam Revu"><svg viewBox="0 0 46 46"><circle cx="23" cy="23" r="22" fill="#0d96dc" /><path d="M6 37Q10 4 28 4q12 0 11 10-1 8-24 15 7 5 12 16" fill="none" stroke="#fff" stroke-width="5.500" /></svg></button>
            </div>
            <div class="tray">
                <svg width="22" height="14" viewBox="0 0 22 14"><path d="M1 13L11 3l10 10" fill="none" stroke="#fff" stroke-width="2.600" /></svg>
                <svg class="cloud" width="32" height="24" viewBox="0 0 32 24"><path d="M8 10a9 9 0 0 1 17-1 8 8 0 0 1 0 15H8A7.500 7.500 0 0 1 8 10z" fill="#1b8fe4" /><path d="M7 10a9 9 0 0 1 17-1l1 1-14 9z" fill="#0a5fb8" /><path d="M3 21l20-10a8 8 0 0 1 2 13H8q-3 0-5-3z" fill="#2fa8f4" /></svg>
                <svg width="32" height="26" viewBox="0 0 32 26"><path d="M1 9.500a21 21 0 0 1 30 0M6 14.500a14 14 0 0 1 20 0M11 19a7 7 0 0 1 10 0" fill="none" stroke="#fff" stroke-width="2.300" /><circle cx="16" cy="23" r="2.700" fill="#fff" /></svg>
                <svg width="32" height="30" viewBox="0 0 32 30"><path d="M1 10h5l8-7v24l-8-7H1z" fill="none" stroke="#fff" stroke-width="2.200" /><path d="M18 10q4 5 0 10M22 6q7 9 0 18M27 2q9 13 0 26" fill="none" stroke="#fff" stroke-width="2.200" /></svg>
                <svg width="32" height="30" viewBox="0 0 32 30"><path d="M16 7h10q3 0 3 3v14q0 3-3 3H2" fill="none" stroke="#fff" stroke-width="2.300" /><path d="M28 13h4v8h-4z" fill="#fff" /><path d="M11 0c4 8 3 15-5 19l-3 7 1-7C-2 13 2 5 11 0z" fill="#fff" /></svg>
                <div class="clock"><span>2:05 PM</span><span>3/12/2025</span></div>
                <svg class="notif" width="26" height="34" viewBox="0 0 26 34"><path d="M3 11a10 10 0 0 1 20 0v9l3 7H0l3-7z" fill="#99ebff" /><path d="M8 29h10q-1 5-5 5t-5-5z" fill="#99ebff" /></svg>
            </div>
        </div>
    </div>
</body>

</html>
```

FILE: styles.css
```css
* {
    box-sizing: border-box;
}

body {
    margin: 0;
    font-family: "Open Sans", "Noto Sans", sans-serif;
    font-size: 23px;
    line-height: 30px;
}

button,
input,
select {
    font: inherit;
    color: inherit;
    background: none;
    border: 0;
    padding: 0;
    margin: 0;
    outline: 0;
}

svg {
    display: block;
    flex: none;
}

ul {
    list-style: none;
    margin: 0;
    padding: 0;
}

a {
    color: inherit;
    text-decoration: none;
}

.sprite {
    position: absolute;
    width: 0;
    height: 0;
}

.desktop {
    position: relative;
    display: flex;
    flex-direction: column;
    height: 100vh;
    overflow: hidden;
    background: #1c1c1c;
}

/* browser */
.browser {
    flex: 1;
    min-height: 0;
    display: flex;
    flex-direction: column;
    background: #2b2b2b;
}

.tabs {
    height: 80px;
    display: flex;
    align-items: center;
    padding-left: 1926px;
    color: #c9c9c9;
    font-size: 22px;
}

.tab {
    width: 166px;
    height: 32px;
    display: flex;
    align-items: center;
    gap: 16px;
    padding: 0 20px 0 21px;
    border-right: 2px solid #484848;
}

.tab:first-child {
    padding-left: 66px;
}

.tab-text {
    flex: 1;
    min-width: 0;
    overflow: hidden;
    white-space: nowrap;
    -webkit-mask-image: linear-gradient(90deg, #000 75%, transparent);
    mask-image: linear-gradient(90deg, #000 75%, transparent);
}

.fav {
    width: 32px;
    height: 32px;
}

.newtab {
    margin-left: 23px;
    color: #d0d0d0;
}

.winctl {
    margin-left: auto;
    margin-right: 36px;
    display: flex;
    gap: 71px;
    color: #8c8c8c;
}

.toolbar {
    height: 94px;
    display: flex;
    align-items: center;
    padding: 0 13px 0 0;
    background: #3b3b3b;
    border-bottom: 2px solid #4a4a48;
    border-top-right-radius: 20px;
    gap: 38px;
    font-size: 22px;
}

.omnibox {
    flex: 1;
    height: 68px;
    border-radius: 0 34px 34px 0;
    background: #282828;
    display: flex;
    align-items: center;
    justify-content: flex-end;
    padding-right: 31px;
}

.toolbar .bar {
    width: 3px;
    height: 32px;
    background: #5a5a5a;
}

.pills {
    display: flex;
    gap: 12px;
    margin-left: -8px;
}

.pill {
    width: 237px;
    height: 68px;
    border-radius: 34px;
    background: #004a77;
    color: #c2e7ff;
    display: flex;
    align-items: center;
    gap: 12px;
    padding-left: 19px;
    white-space: nowrap;
}

.pill.finish {
    width: 227px;
    gap: 20px;
    padding-left: 28px;
}

.page {
    flex: 1;
    min-height: 0;
    position: relative;
    isolation: isolate;
    display: flex;
    flex-direction: column;
    background: #979997;
    color: #1b1e20;
    font-size: 27px;
}

.app {
    flex: 1;
    min-height: 0;
    display: flex;
}

.app-main {
    flex: 1;
    display: flex;
    flex-direction: column;
}

.edge {
    width: 34px;
    background: linear-gradient(90deg, #7f8487, #8f9498 14px);
}

.app-head {
    height: 96px;
    background: #864e22;
    display: flex;
    justify-content: flex-end;
    align-items: flex-start;
    padding: 16px 26px 0 0;
    gap: 40px;
    color: #c0b3a6;
}

.search {
    width: 638px;
    height: 64px;
    border: 2px solid #75706a;
    border-radius: 6px;
    background: #939493;
    display: flex;
    align-items: center;
    gap: 22px;
    padding: 0 14px;
    color: #55585b;
}

.search input::placeholder {
    color: #55585b;
}

.head-icons {
    display: flex;
    align-items: center;
    gap: 45px;
    height: 64px;
}

.bell {
    position: relative;
}

.dot {
    position: absolute;
    top: -10px;
    right: -3px;
    width: 16px;
    height: 16px;
    border-radius: 8px;
    background: #a34946;
}

.avatar {
    width: 48px;
    height: 48px;
    margin-left: -6px;
    border-radius: 24px;
    background: #b4776a;
    color: #681f35;
    font: 400 22px/48px Inter, sans-serif;
    text-align: center;
}

.app-body {
    flex: 1;
    min-height: 0;
    display: flex;
}

.jobs {
    width: 501px;
    padding-top: 486px;
    font-size: 23px;
}

.job {
    height: 74px;
    padding: 24px 17px 0;
    background: #7d888f;
}

.job.tall {
    height: 339px;
    margin-bottom: 177px;
}

.list {
    flex: 1;
    display: flex;
    flex-direction: column;
    align-items: flex-end;
    padding: 160px 48px 0 0;
}

.btn-bill {
    flex: none;
    height: 72px;
    width: 140px;
    border-radius: 16px;
    background: #04369a;
    color: #b8bfcc;
    display: flex;
    align-items: center;
    justify-content: flex-end;
    gap: 13px;
    padding-right: 32px;
    font: 600 27px/30px "Open Sans", sans-serif;
}

.bills {
    width: 100%;
    margin-top: 48px;
    table-layout: fixed;
    border-collapse: collapse;
}

.bills th {
    height: 109px;
    background: #8b9093;
    text-align: left;
}

.bills td {
    height: 166px;
    vertical-align: top;
    padding: 15px 0 0;
}

.bills tr {
    border-bottom: 2px solid #7b7d7d;
}

.bills .end {
    border-bottom: 0;
}

.bills .end td {
    height: 120px;
}

.bills .short td {
    height: 98px;
    padding-top: 35px;
}

.bills .date {
    width: 126px;
    padding-left: 0;
    overflow: hidden;
    white-space: nowrap;
}

.hscroll {
    flex: none;
    width: 100%;
    height: 35px;
    margin-top: auto;
    background: #8c8d8c;
    display: flex;
    align-items: center;
    justify-content: flex-end;
    padding-right: 12px;
}

.pager {
    height: 130px;
    background: linear-gradient(90deg, transparent 502px, #7b7d7d 502px) top / 100% 2px no-repeat;
    display: flex;
    padding-right: 64px;
    font-size: 26px;
    line-height: 134px;
}

.pager-left {
    width: 502px;
    border-right: 2px solid #757776;
}

.pager-box {
    width: 249px;
    height: 72px;
    margin: 24px auto 0 47px;
    border: 2px solid #757776;
    border-radius: 10px;
}

/* modals over the page */
.modal {
    position: absolute;
    display: flex;
    flex-direction: column;
    border-radius: 8px;
    overflow: hidden;
    isolation: isolate;
}

.modal header {
    display: flex;
    justify-content: flex-end;
}

.modal footer {
    display: flex;
    justify-content: flex-end;
    align-items: center;
    padding-right: 32px;
    font: 500 28px/34px Inter, sans-serif;
}

.bill {
    inset: 48px 200px 49px;
    background: #c5c5c5;
    box-shadow: 0 16px 60px rgba(0, 0, 0, .5);
}

.bill header {
    height: 176px;
    padding-right: 57px;
    background: #c5c5c5;
    border-bottom: 2px solid #b4b5b6;
    color: #1b1e20;
    align-items: center;
    box-shadow: 0 8px 40px rgba(0, 0, 0, .2);
    z-index: 1;
}

.bill-body {
    flex: 1;
    min-height: 0;
    display: flex;
    background: #b7bbc0;
    padding-left: 32px;
}

.bill-card {
    flex: 1;
    margin: 0 33px 32px 0;
    background: #c5c5c5;
    display: flex;
    flex-direction: column;
}

.strip {
    height: 46px;
    border-bottom: 2px solid #b7b8b9;
}

.items {
    flex: 1;
    display: flex;
    flex-direction: column;
    align-items: flex-end;
    padding: 46px 32px 0;
}

.btn-line {
    height: 60px;
    padding: 0 20px;
    border: 2px solid #8f9193;
    border-radius: 6px;
    color: #4a4b4d;
    font: 24px/30px "Liberation Sans", Arial, sans-serif;
}

.btn-line.big {
    height: 64px;
    width: 277px;
    padding: 0;
    color: #1b1e20;
    font: 27px/30px "Open Sans", sans-serif;
}

.costs {
    width: 100%;
    margin-top: 48px;
    table-layout: fixed;
    border-collapse: collapse;
    border: 2px solid #9a9da0;
    font-size: 28px;
    font-weight: 700;
}

.c-cost {
    width: 240px;
}

.c-gap {
    width: 90px;
}

.c-bar {
    width: 34px;
}

.costs th,
.costs td {
    padding: 0;
}

.costs th {
    height: 79px;
    background: #b7bbc0;
    font-size: 27px;
}

.costs .num {
    text-align: right;
    vertical-align: top;
}

.costs th.num {
    padding: 25px 46px 0 0;
}

.costs .tick {
    background: linear-gradient(#a6aaae, #a6aaae) left center / 2px 44px no-repeat #b7bbc0;
}

.costs tbody td {
    height: 142px;
    border-top: 2px solid #979da2;
}

.costs tbody .num {
    padding: 33px 25px 0 0;
}

.costs tbody .last td {
    height: 86px;
}

.costs tbody .barcell {
    background: #bcbcbc;
    color: #7d7d7d;
}

.vbar {
    height: 358px;
    padding: 8px 0 6px;
    display: flex;
    flex-direction: column;
    align-items: center;
    justify-content: space-between;
}

.up {
    transform: rotate(180deg);
}

.costs tfoot td {
    height: 80px;
    background: #b7bbc0;
    border-top: 2px solid #9a9da0;
}

.costs tfoot .num {
    padding: 23px 16px 0 0;
}

.docs {
    display: flex;
    gap: 6px;
    padding: 38px 32px 0;
    border-top: 2px solid #b7b8b9;
}

.docs .btn-line:first-child {
    width: 87px;
}

.bill h3,
.bill p {
    margin: 0;
    font-size: 30px;
    line-height: 40px;
    font-weight: 600;
}

.bill h3 {
    padding: 63px 32px 32px;
    border-bottom: 2px solid #b7b8b9;
}

.bill p {
    padding: 36px 32px 54px;
}

.scroll {
    width: 33px;
    background: #bcbcbc;
    color: #5a5b5c;
    display: flex;
    flex-direction: column;
    align-items: center;
    padding: 14px 0 12px;
}

.thumb {
    width: 30px;
    height: 475px;
    margin: auto 0 13px;
    background: #969696;
}

.bill footer {
    height: 136px;
}

.split {
    display: flex;
    height: 72px;
    border-radius: 16px;
    overflow: hidden;
    background: #033ea8;
    color: #c6cedb;
}

.split button {
    width: 239px;
}

.split .more {
    width: 65px;
    border-left: 2px solid #b4bccb;
    display: flex;
    align-items: center;
    justify-content: center;
}

.upload {
    top: 48px;
    left: 593px;
    right: 593px;
    background: #fff;
    box-shadow: 0 16px 60px rgba(0, 0, 0, .5);
}

.upload header {
    height: 127px;
    padding-right: 51px;
    color: #5a5f6d;
}

.upload-body {
    height: 565px;
    background: #eff3fc;
    padding: 33px 32px;
}

.upload-card {
    height: 290px;
    background: #fff;
    border-radius: 8px;
}

.upload-top {
    height: 95px;
    border-bottom: 2px solid #eee;
}

.upload p {
    margin: 0;
    padding: 101px 508px 0 0;
    text-align: right;
}

.upload footer {
    height: 136px;
    gap: 15px;
}

.upload footer button {
    width: 160px;
    height: 74px;
    border-radius: 16px;
}

.upload .cancel {
    border: 2px solid #f0f0f0;
    color: #909090;
    font-weight: 400;
}

.upload .go {
    background: #80a5ea;
    color: #fff;
    font-weight: 600;
}

/* file picker */
.picker {
    position: absolute;
    top: 0;
    left: 13px;
    width: 1971px;
    height: 1308px;
    display: flex;
    flex-direction: column;
    border: 2px solid #4a4a4a;
    border-left-width: 1px;
    border-right-width: 1px;
    border-radius: 16px;
    overflow: hidden;
    background: #191919;
    color: #fff;
    box-shadow: 0 50px 80px rgba(0, 0, 0, .6), 0 0 50px rgba(0, 0, 0, .45);
}

.p-title {
    height: 56px;
    background: #202020;
    display: flex;
    align-items: center;
    gap: 5px;
    padding: 0 23px 2px 12px;
}

.p-title button {
    margin-left: auto;
}

.p-nav {
    height: 91px;
    display: flex;
    align-items: center;
    padding-right: 12px;
}

.arrows {
    width: 272px;
    padding-left: 29px;
    display: flex;
    align-items: center;
    gap: 38px;
    color: #a6a6a6;
}

.back {
    margin-right: 6px;
}

.fwd {
    transform: rotate(180deg);
}

.to-top {
    transform: rotate(90deg);
    color: #fff;
}

.address,
.find {
    height: 70px;
    border: 1px solid #555;
    display: flex;
    align-items: center;
}

.address {
    flex: 1;
    gap: 15px;
    padding: 0 24px 0 15px;
}

.address .drop {
    margin-left: auto;
    margin-right: 35px;
}

.find {
    width: 406px;
    margin-left: 12px;
    padding: 0 23px 0 13px;
}

.find input {
    flex: 1;
    min-width: 0;
}

.find input::placeholder {
    color: #767676;
}

.p-tools {
    height: 62px;
    background: #1f2020;
    display: flex;
    align-items: center;
    gap: 58px;
    padding: 0 30px 0 35px;
}

.p-tools button {
    display: flex;
    align-items: center;
    gap: 8px;
}

.views {
    margin-left: auto;
    display: flex;
    align-items: center;
}

.views .caret {
    margin: 0 40px 0 16px;
}

.views .q {
    margin-left: 40px;
}

.p-body {
    flex: 1;
    min-height: 0;
    display: flex;
}

.places {
    width: 614px;
    padding-left: 4px;
}

.places li {
    height: 64px;
    display: flex;
    align-items: center;
}

.places .on {
    background: #333;
}

.exp {
    margin: 0 28px 0 41px;
    color: #8a8a8a;
}

.tree .ico {
    margin-right: 7px;
}

.rule {
    height: 2px;
    margin: 31px 14px 31px 15px;
    background: #3c3c3c;
}

.quick li {
    padding-left: 63px;
    padding-right: 4px;
}

.quick .ico {
    margin-right: 5px;
}

.pin {
    margin-left: auto;
}

.places-bar {
    width: 41px;
    padding: 269px 10px 0 9px;
    border-right: 3px solid #2b2b2b;
}

.places-bar div {
    height: 380px;
    background: #979797;
}

.files {
    flex: 1;
    min-width: 0;
    position: relative;
    display: flex;
    flex-direction: column;
    padding-left: 30px;
    overflow: hidden;
}

.sort {
    position: absolute;
    left: 324px;
    top: 0;
}

.files table {
    width: 100%;
    margin-top: -10px;
    table-layout: fixed;
    border-spacing: 0 8px;
}

.f-name {
    width: 583px;
}

.f-status {
    width: 180px;
}

.f-date {
    width: 324px;
}

.files th {
    height: 59px;
    padding: 0 0 0 12px;
    text-align: left;
    font-weight: 400;
    color: #dedede;
    background: linear-gradient(#555, #555) left top / 2px 55px no-repeat;
}

.files th:first-child {
    background: none;
    padding-left: 20px;
}

.files td {
    height: 54px;
    padding: 0 0 0 12px;
    color: #dedede;
    white-space: nowrap;
}

.files td:first-child {
    padding-left: 8px;
    color: #fff;
}

.cell {
    display: flex;
    align-items: center;
    gap: 10px;
}

.cell svg {
    margin-left: -2px;
    margin-right: 3px;
}

.cell.head {
    gap: 20px;
}

.cell input,
.nobox {
    width: 26px;
    height: 26px;
    flex: none;
}

.cell input {
    appearance: none;
    border-radius: 5px;
    border: 2px solid #8a8a8a;
    background: #f3f3f3;
}

.sel .cell input {
    border: 0;
    background: #0a5fb8;
    display: grid;
    place-items: center;
}

.sel .cell input::before {
    content: "";
    width: 13px;
    height: 7px;
    border: 2px solid #fff;
    border-top: 0;
    border-right: 0;
    rotate: -45deg;
    margin-bottom: 4px;
}

.sel td {
    background: #4d4d4d;
    border: 2px solid #b5b5b5;
    border-width: 2px 0;
}

.files .sel td:first-child {
    border-left-width: 2px;
    padding-left: 6px;
}

.state {
    display: flex;
    align-items: center;
    gap: 7px;
    color: #808080;
}

.files-bar {
    margin-top: auto;
    height: 33px;
    display: flex;
    align-items: center;
    padding: 0 36px 0 6px;
}

.files-bar .on {
    flex: 1;
    height: 20px;
    margin-top: 2px;
    background: #979797;
}

.files-bar .off {
    width: 213px;
    height: 33px;
    border-top: 2px solid #000;
    background: #151515;
}

.p-foot {
    height: 181px;
    background: #373737;
    position: relative;
    display: flex;
    align-items: flex-start;
    padding: 44px 34px 0 0;
}

.p-foot label {
    width: 351px;
    line-height: 42px;
    text-align: right;
}

.combo {
    flex: 1;
    height: 42px;
    margin-left: 9px;
    border: 1px solid #a0a0a0;
    display: flex;
    align-items: center;
    padding: 0 9px 0 3px;
}

.combo input,
.combo select {
    flex: 1;
    min-width: 0;
    appearance: none;
}

.combo svg {
    color: #d0d0d0;
}

.choices {
    width: 376px;
    margin-left: 24px;
}

.combo.type {
    margin: 0;
    background: #323232;
}

.actions {
    display: flex;
    justify-content: space-between;
    margin-top: 10px;
    padding: 0 1px;
}

.open,
.actions .cancel {
    width: 174px;
    height: 51px;
    border: 2px solid #a0a0a0;
    border-radius: 3px;
    background: #323232;
}

.open {
    display: flex;
    align-items: center;
    background: #454545;
}

.open button {
    flex: 1;
}

.open .more {
    flex: none;
    width: 30px;
    height: 43px;
    padding-left: 4px;
    border-left: 2px solid #a0a0a0;
    color: #ccc;
}

.grip {
    position: absolute;
    right: 4px;
    bottom: 3px;
}

/* taskbar */
.taskbar {
    height: 96px;
    padding-bottom: 2px;
    border-top: 2px solid #3a3d3d;
    background: #1c1c1c;
    color: #fff;
    display: flex;
    justify-content: space-between;
    align-items: center;
}

.apps {
    display: flex;
    gap: 8px;
    padding-left: 25px;
}

.apps button {
    position: relative;
    width: 80px;
    height: 80px;
    display: flex;
    align-items: center;
    justify-content: center;
    border-radius: 8px;
}

.apps svg {
    width: 48px;
    height: 48px;
}

.apps .active {
    background: #2a2a2a;
    border: 2px solid #333;
}

.run::after {
    content: "";
    position: absolute;
    left: 50%;
    bottom: 1px;
    width: 12px;
    height: 6px;
    margin-left: -6px;
    border-radius: 3px;
    background: #9a9a9a;
}

.run.active::after {
    bottom: -1px;
    width: 32px;
    margin-left: -16px;
    background: #4cc2ff;
}

.count {
    position: absolute;
    top: 5px;
    right: 6px;
    width: 32px;
    height: 32px;
    border-radius: 16px;
    background: #c42b1c;
    font-size: 23px;
    font-weight: 400;
    line-height: 31px;
    text-align: center;
}

.tray {
    display: flex;
    align-items: center;
    gap: 16px;
    padding-right: 43px;
}

.tray .cloud {
    margin: 0 16px 0 22px;
}

.clock {
    margin-left: 16px;
    display: flex;
    flex-direction: column;
    text-align: right;
    line-height: 32px;
}

.notif {
    margin-left: 2px;
}
```
